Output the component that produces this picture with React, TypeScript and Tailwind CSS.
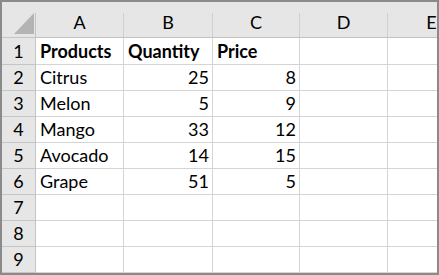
const cols = ['A', 'B', 'C', 'D', 'E']
const widths = ['w-[88px]', 'w-[89px]', 'w-[87px]', 'w-[88px]', 'w-[87px]']

const rows: (string | number)[][] = [
  ['Products', 'Quantity', 'Price'],
  ['Citrus', 25, 8],
  ['Melon', 5, 9],
  ['Mango', 33, 12],
  ['Avocado', 14, 15],
  ['Grape', 51, 5],
  [],
  [],
  [],
]

export default function App() {
  return (
    <div
      className="w-[439px] h-[275px] border-2 border-[#8a8a8a] bg-white text-black overflow-hidden"
      style={{ fontFamily: 'Lato, "Open Sans", sans-serif' }}
    >
      {/* column headers */}
      <div className="flex h-[36px] bg-[#e6e6e6] border-b border-[#c4c4c4]">
        <div className="relative w-[34px] shrink-0 after:absolute after:right-0 after:top-[11px] after:bottom-0 after:w-px after:bg-[#c4c4c4]">
          <svg className="absolute left-[12px] top-[11px]" width="20" height="21" viewBox="0 0 20 21">
            <polygon points="20,0 20,21 0,21" fill="#b4b4b4" />
          </svg>
        </div>
        {cols.map((c, i) => (
          <div
            key={c}
            className={`relative ${widths[i]} shrink-0 flex items-end justify-center pb-[2px] text-[18px] leading-[26px] ${
              i < 4 ? 'after:absolute after:right-0 after:top-[11px] after:bottom-0 after:w-px after:bg-[#d0d0d0] pr-px' : ''
            }`}
          >
            {c}
          </div>
        ))}
      </div>

      {rows.map((r, ri) => (
        <div key={ri} className={`flex ${ri === 0 ? 'h-[27px]' : 'h-[26px]'}`}>
          <div className="w-[34px] shrink-0 bg-[#e6e6e6] border-r border-b border-[#c4c4c4] flex items-center justify-center text-[18px]">
            {ri + 1}
          </div>
          {cols.map((c, ci) => {
            const v = r[ci]
            const isNum = typeof v === 'number'
            return (
              <div
                key={c}
                className={`${widths[ci]} shrink-0 border-b border-[#d4d4d4] ${ci < 4 ? 'border-r' : ''} flex items-center text-[18px] whitespace-nowrap overflow-hidden ${
                  isNum ? 'justify-end pr-[3px]' : 'pl-[4px]'
                } ${ri === 0 ? 'font-bold' : ''}`}
              >
                {v}
              </div>
            )
          })}
        </div>
      ))}
    </div>
  )
}
